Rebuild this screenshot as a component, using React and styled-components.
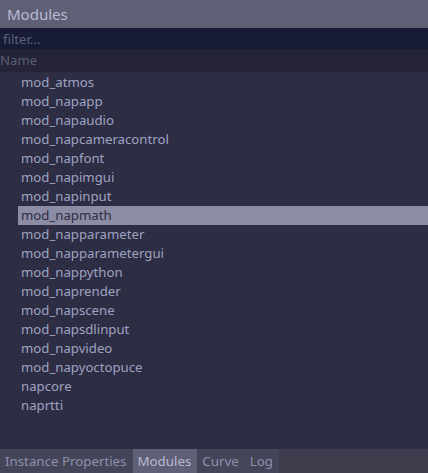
import React, { useState } from 'react';
import styled, { createGlobalStyle } from 'styled-components';

const GlobalStyle = createGlobalStyle`
  html, body { margin: 0; padding: 0; background: #2d2d44; }
  body { font-family: "Noto Sans", "Open Sans", sans-serif; }
`;

const modules = [
  'mod_atmos', 'mod_napapp', 'mod_napaudio', 'mod_napcameracontrol', 'mod_napfont',
  'mod_napimgui', 'mod_napinput', 'mod_napmath', 'mod_napparameter', 'mod_napparametergui',
  'mod_nappython', 'mod_naprender', 'mod_napscene', 'mod_napsdlinput', 'mod_napvideo',
  'mod_napyoctopuce', 'napcore', 'naprtti',
];

const tabs = ['Instance Properties', 'Modules', 'Curve', 'Log'];

const App = () => {
  const [selected, setSelected] = useState('mod_napmath');
  const [active, setActive] = useState('Modules');
  return (
    <Window>
      <GlobalStyle />
      <TitleBar>Modules</TitleBar>
      <Filter placeholder="filter..." />
      <Header>Name</Header>
      <List>
        {modules.map((m) => (
          <Row key={m} $selected={m === selected} onClick={() => setSelected(m)}>
            {m}
          </Row>
        ))}
      </List>
      <TabBar>
        {tabs.map((t) => (
          <Tab key={t} $active={t === active} onClick={() => setActive(t)}>
            {t}
          </Tab>
        ))}
      </TabBar>
    </Window>
  );
};

export default App;

const Window = styled.div`
  width: 428px;
  height: 473px;
  display: flex;
  flex-direction: column;
  background: #2d2d44;
  overflow: hidden;
`;

const TitleBar = styled.div`
  height: 28px;
  flex: none;
  background: #5f5f75;
  color: #b9bbd6;
  font-size: 15px;
  line-height: 28px;
  padding-left: 7px;
`;

const Filter = styled.input`
  height: 21px;
  flex: none;
  border: none;
  outline: none;
  margin: 0;
  padding: 0 0 0 3px;
  background: #171b36;
  color: #b9bbd6;
  font-family: inherit;
  font-size: 13.2px;
  &::placeholder { color: #5c5f7a; }
`;

const Header = styled.div`
  height: 23px;
  flex: none;
  background: #242436;
  color: #5d5e72;
  font-size: 13.2px;
  line-height: 23px;
`;

const List = styled.div`
  flex: 1;
  padding-top: 1px;
`;

const Row = styled.div`
  height: 19px;
  line-height: 19px;
  margin-left: 18px;
  padding-left: 3px;
  font-size: 13.2px;
  color: ${(p) => (p.$selected ? '#2d2d44' : '#9fa3c2')};
  background: ${(p) => (p.$selected ? '#8c8ca4' : 'transparent')};
  cursor: default;
`;

const TabBar = styled.div`
  height: 24px;
  flex: none;
  display: flex;
  background: #3d3d4e;
`;

const Tab = styled.div`
  padding: 0 6px 0 5px;
  font-size: 13.3px;
  line-height: 24px;
  color: ${(p) => (p.$active ? '#b9bbd6' : '#8e90aa')};
  background: ${(p) => (p.$active ? '#5f5f75' : '#45455a')};
  cursor: default;
`;
